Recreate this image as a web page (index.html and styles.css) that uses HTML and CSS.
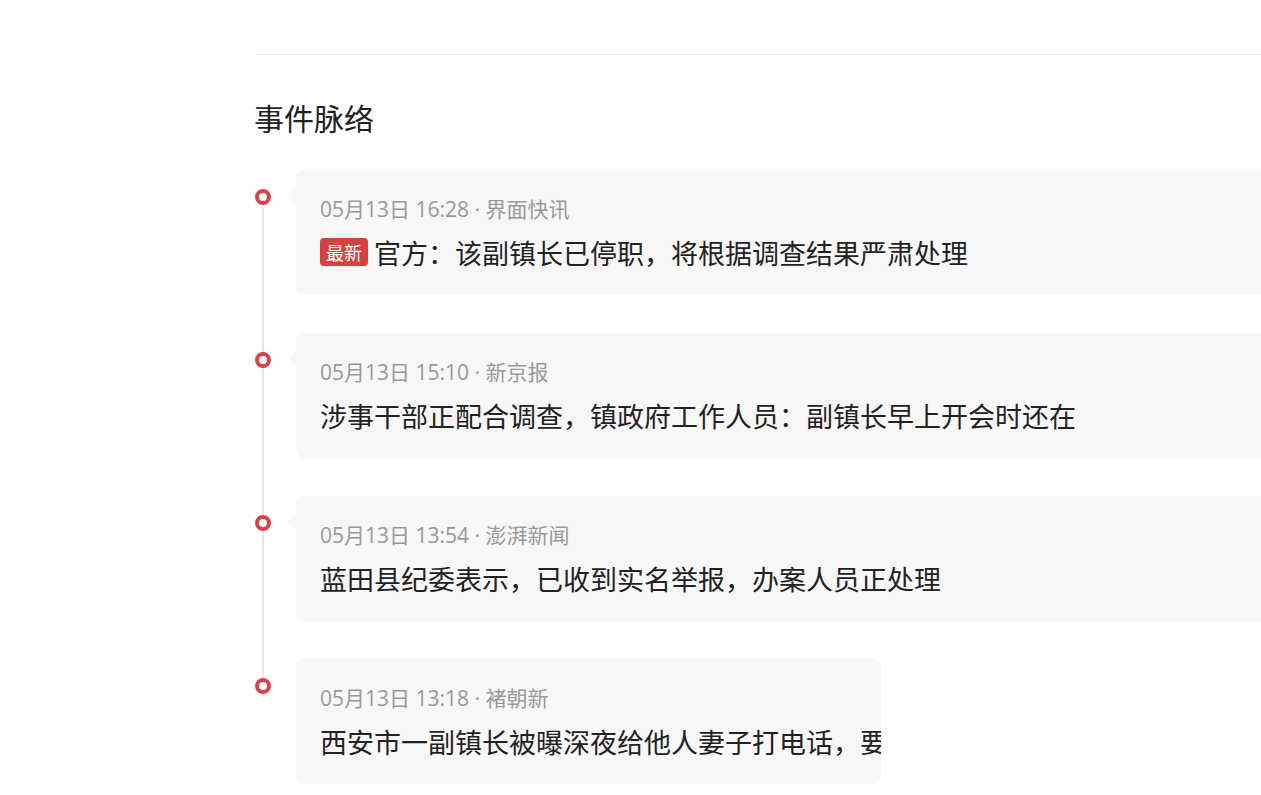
FILE: index.html
```html
<!DOCTYPE html>
<html lang="zh-CN">
<head>
<meta charset="utf-8">
<title>事件脉络</title>
<link rel="stylesheet" href="styles.css">
</head>
<body>
<div class="main">
  <div class="divider"></div>
  <h2 class="section-title">事件脉络</h2>
  <div class="timeline">
    <div class="item">
      <span class="dot"></span>
      <div class="card">
        <div class="meta">05月13日 16:28 · 界面快讯</div>
        <div class="title"><span class="badge">最新</span>官方：该副镇长已停职，将根据调查结果严肃处理</div>
      </div>
    </div>
    <div class="item">
      <span class="dot"></span>
      <div class="card">
        <div class="meta">05月13日 15:10 · 新京报</div>
        <div class="title">涉事干部正配合调查，镇政府工作人员：副镇长早上开会时还在</div>
      </div>
    </div>
    <div class="item">
      <span class="dot"></span>
      <div class="card">
        <div class="meta">05月13日 13:54 · 澎湃新闻</div>
        <div class="title">蓝田县纪委表示，已收到实名举报，办案人员正处理</div>
      </div>
    </div>
    <div class="item last">
      <span class="dot"></span>
      <div class="card card-short">
        <div class="meta">05月13日 13:18 · 褚朝新</div>
        <div class="title">西安市一副镇长被曝深夜给他人妻子打电话，要</div>
      </div>
    </div>
  </div>
</div>
</body>
</html>
```

FILE: styles.css
```css
html, body {
  margin: 0;
  padding: 0;
  overflow: hidden;
  background: #fff;
}
body {
  font-family: "Noto Sans CJK SC", "Noto Sans", sans-serif;
  color: #222;
}
.main {
  margin-left: 254px;
  width: 1060px;
}
.divider {
  margin-top: 54px;
  height: 1px;
  background: #ececec;
}
.section-title {
  margin: 42px 0 0;
  font-size: 30px;
  line-height: 40px;
  font-weight: 400;
  color: #222;
}
.timeline {
  margin-top: 33px;
  padding-left: 42px;
}
.item {
  position: relative;
  margin-bottom: 38px;
}
.item::before {
  content: "";
  position: absolute;
  left: -34px;
  top: 26px;
  width: 2px;
  height: calc(100% + 38px);
  background: #e6e6e6;
}
.item.last::before {
  display: none;
}
.dot {
  position: absolute;
  left: -41px;
  top: 19px;
  width: 8px;
  height: 8px;
  border: 4px solid #d8434b;
  border-radius: 50%;
  background: #fff;
  z-index: 1;
}
.card {
  position: relative;
  background: #f7f7f7;
  border-radius: 8px;
  padding: 25px 24px 20px;
  height: 80px;
}
.card::before {
  content: "";
  position: absolute;
  left: -8px;
  top: 18px;
  border-top: 8px solid transparent;
  border-bottom: 8px solid transparent;
  border-right: 8px solid #f7f7f7;
}
.card-short {
  width: 537px;
  overflow: hidden;
  white-space: nowrap;
}
.meta {
  font-family: "Open Sans", "Noto Sans CJK SC", sans-serif;
  font-size: 21px;
  line-height: 28px;
  color: #999;
}
.title {
  margin-top: 10px;
  font-size: 27px;
  line-height: 40px;
  color: #222;
  white-space: nowrap;
}
.badge {
  display: inline-block;
  vertical-align: 4px;
  background: #d8413f;
  color: #fff;
  font-size: 18px;
  line-height: 28px;
  height: 28px;
  padding: 0 6px;
  border-radius: 4px;
  margin-right: 6px;
}
```
